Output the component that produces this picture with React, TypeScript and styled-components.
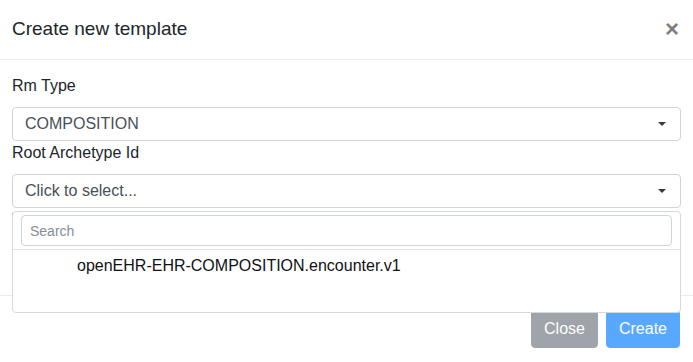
import styled, { createGlobalStyle } from 'styled-components'

const GlobalStyle = createGlobalStyle`
  html, body {
    margin: 0;
    padding: 0;
    background: #fff;
  }
  body {
    font-family: "Liberation Sans", Arial, sans-serif;
    font-size: 16px;
    line-height: 1.5;
    color: #212529;
  }
  * {
    box-sizing: border-box;
  }
`

const App = () => {
  return (
    <>
      <GlobalStyle />
      <Modal>
        <Header>
          <Title>Create new template</Title>
          <CloseX type="button" aria-label="Close">×</CloseX>
        </Header>
        <Body>
          <Group>
            <Label>Rm Type</Label>
            <Select>
              <SelectText>COMPOSITION</SelectText>
              <Caret />
            </Select>
          </Group>
          <Group>
            <Label>Root Archetype Id</Label>
            <Select>
              <SelectText>Click to select...</SelectText>
              <Caret />
            </Select>
            <Menu>
              <SearchWrap>
                <SearchInput placeholder="Search" />
              </SearchWrap>
              <Item>openEHR-EHR-COMPOSITION.encounter.v1</Item>
            </Menu>
          </Group>
          <Group>
            <Label>Template Id</Label>
            <Select />
          </Group>
        </Body>
        <Footer>
          <Button variant="secondary" disabled>Close</Button>
          <Button variant="primary" disabled>Create</Button>
        </Footer>
      </Modal>
    </>
  )
}

export default App

const Modal = styled.div`
width: 693px;
height: 362px;
display: flex;
flex-direction: column;
background: #fff;
overflow: hidden;
`

const Header = styled.div`
display: flex;
justify-content: space-between;
align-items: center;
padding: 14px 12px 15px 12px;
border-bottom: 1px solid #e9ecef;
`

const Title = styled.h5`
margin: 0;
font-size: 19px;
font-weight: 400;
line-height: 30px;
color: #212529;
`

const CloseX = styled.button`
border: 0;
background: transparent;
padding: 0 2px;
font-family: "Liberation Sans", Arial, sans-serif;
font-size: 24px;
font-weight: 700;
line-height: 1;
color: #000;
opacity: .5;
cursor: pointer;
`

const Body = styled.div`
flex: 1;
padding: 14px 12px 0 12px;
`

const Group = styled.div`
position: relative;
`

const Label = styled.label`
display: block;
line-height: 24px;
margin-bottom: 9px;
`

const Select = styled.div`
display: flex;
align-items: center;
justify-content: space-between;
height: 34px;
padding: 0 14px 0 12px;
border: 1px solid #ced4da;
border-radius: 4px;
color: #495057;
background: #fff;
`

const SelectText = styled.span`
font-size: 16px;
`

const Caret = styled.span`
width: 0;
height: 0;
border-left: 4px solid transparent;
border-right: 4px solid transparent;
border-top: 4px solid #343a40;
`

const Menu = styled.div`
position: absolute;
top: calc(100% + 3px);
left: 0;
right: 0;
z-index: 10;
height: 102px;
background: #fff;
border: 1px solid #d6d9dc;
border-radius: 4px;
`

const SearchWrap = styled.div`
padding: 3px 8px 3px 8px;
border-bottom: 1px solid #dee2e6;
`

const SearchInput = styled.input`
display: block;
width: 100%;
height: 31px;
padding: 0 8px;
border: 1px solid #ced4da;
border-radius: 4px;
font-family: "Liberation Sans", Arial, sans-serif;
font-size: 14px;
color: #495057;
outline: none;
&::placeholder {
  color: #868e96;
}
`

const Item = styled.div`
padding: 4px 0 0 64px;
line-height: 24px;
color: #111;
`

const Footer = styled.div`
display: flex;
justify-content: flex-end;
gap: 8px;
padding: 14px 13px 14px 12px;
border-top: 1px solid #e9ecef;
`

const Button = styled.button<{ variant: 'primary' | 'secondary' }>`
font-family: "Liberation Sans", Arial, sans-serif;
font-size: 16px;
line-height: 24px;
padding: 6px 12px;
border-radius: 4px;
color: #fff;
border: 1px solid ${p => (p.variant === 'primary' ? '#007bff' : '#6c757d')};
background: ${p => (p.variant === 'primary' ? '#007bff' : '#6c757d')};
&:disabled {
  opacity: .65;
}
`
